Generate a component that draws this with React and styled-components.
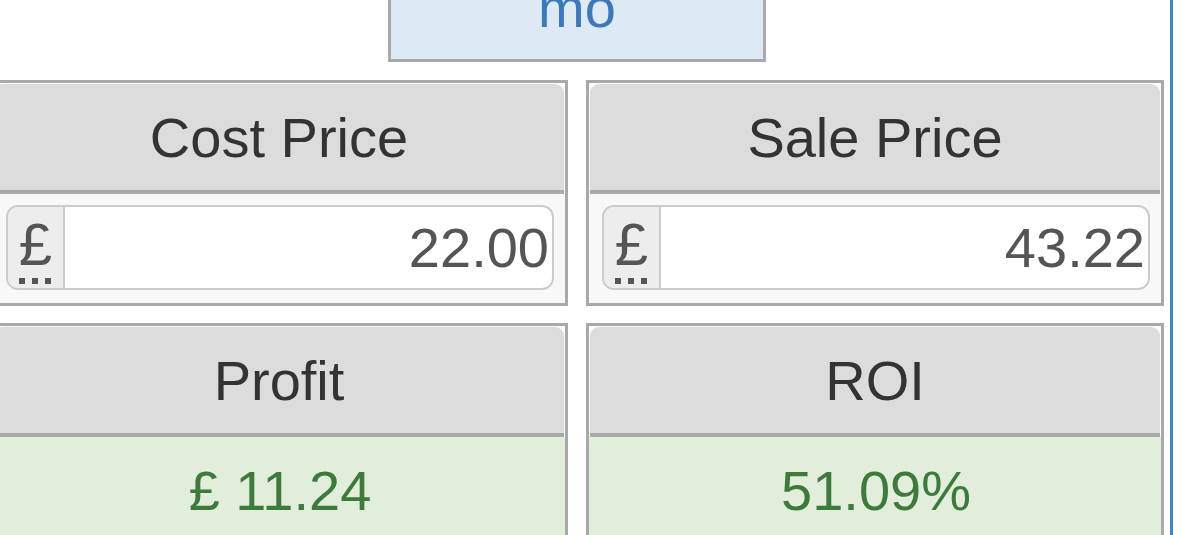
import styled, { createGlobalStyle } from "styled-components";

const GlobalStyle = createGlobalStyle`
  html, body {
    margin: 0;
    padding: 0;
    background: #ffffff;
    overflow: hidden;
  }
  body {
    font-family: "Liberation Sans", Arial, Helvetica, sans-serif;
  }
`;

const Page = styled.div`
  width: 1187px;
  height: 535px;
  overflow: hidden;
`;

const Frame = styled.div`
  box-sizing: border-box;
  width: 1183px;
  margin-left: -10px;
  height: 535px;
  padding-right: 6px;
  border-right: 3px solid #3d87c9;
`;

const TopBox = styled.div`
  box-sizing: border-box;
  width: 378px;
  height: 62px;
  margin: 0 auto;
  display: flex;
  align-items: flex-end;
  justify-content: center;
  padding-bottom: 23px;
  background: #dde9f5;
  border: 3px solid #a9a9a9;
  border-top: none;
  color: #3b78bd;
  font-size: 56px;
  line-height: 56px;
`;

const Grid = styled.div`
  display: grid;
  grid-template-columns: repeat(2, minmax(0, 1fr));
  column-gap: 18px;
  row-gap: 17px;
  margin-top: 18px;
`;

const Card = styled.div`
  min-width: 0;
  border: 3px solid #a9a9a9;
  background: #fbfbfb;
  display: flex;
  flex-direction: column;
`;

const Header = styled.div`
  height: 106px;
  margin: 1px 1px 0 1px;
  display: flex;
  align-items: center;
  justify-content: center;
  background: #dcdcdc;
  border-radius: 9px 9px 0 0;
  border-bottom: 4px solid #a9a9a9;
  color: #333333;
  font-size: 56px;
`;

const Body = styled.div`
  box-sizing: border-box;
  height: 109px;
  padding: 11px 11px 13px 13px;
  background: ${(p) => (p.$tone === "success" ? "#e1efda" : "#f8f8f8")};
  color: ${(p) => (p.$tone === "success" ? "#3e7a3c" : "#555555")};
  font-size: 56px;
  display: flex;
  align-items: center;
  justify-content: center;
`;

const InputGroup = styled.div`
  box-sizing: border-box;
  width: 100%;
  height: 85px;
  display: flex;
  border: 2px solid #cbcbcb;
  border-radius: 12px;
  overflow: hidden;
  background: #ffffff;
`;

const Addon = styled.div`
  width: 55px;
  flex: none;
  display: flex;
  align-items: center;
  justify-content: center;
  background: #ededed;
  border-right: 2px solid #cbcbcb;
  color: #555555;
  font-size: 60px;
`;

const Abbr = styled.span`
  position: relative;
  display: inline-block;
  line-height: 1;
  margin-top: -6px;

  &::after {
    content: "";
    position: absolute;
    left: 0;
    right: 0;
    bottom: -9px;
    height: 6px;
    background: repeating-linear-gradient(
      90deg,
      #555555 0 6px,
      transparent 6px 13px
    );
  }
`;

const Field = styled.input`
  flex: 1;
  min-width: 0;
  width: 100%;
  border: none;
  outline: none;
  background: transparent;
  text-align: right;
  padding: 0 3px 0 0;
  margin: 0;
  color: #555555;
  font-family: "Liberation Sans", Arial, Helvetica, sans-serif;
  font-size: 56px;
`;

function PriceCard({ title, value }) {
  return (
    <Card>
      <Header>{title}</Header>
      <Body>
        <InputGroup>
          <Addon>
            <Abbr title="GBP">£</Abbr>
          </Addon>
          <Field type="text" readOnly defaultValue={value} />
        </InputGroup>
      </Body>
    </Card>
  );
}

function ResultCard({ title, value }) {
  return (
    <Card>
      <Header>{title}</Header>
      <Body $tone="success">{value}</Body>
    </Card>
  );
}

export default function App() {
  return (
    <Page>
      <GlobalStyle />
      <Frame>
        <TopBox>mo</TopBox>
        <Grid>
          <PriceCard title="Cost Price" value="22.00" />
          <PriceCard title="Sale Price" value="43.22" />
          <ResultCard title="Profit" value="£ 11.24" />
          <ResultCard title="ROI" value="51.09%" />
        </Grid>
      </Frame>
    </Page>
  );
}
